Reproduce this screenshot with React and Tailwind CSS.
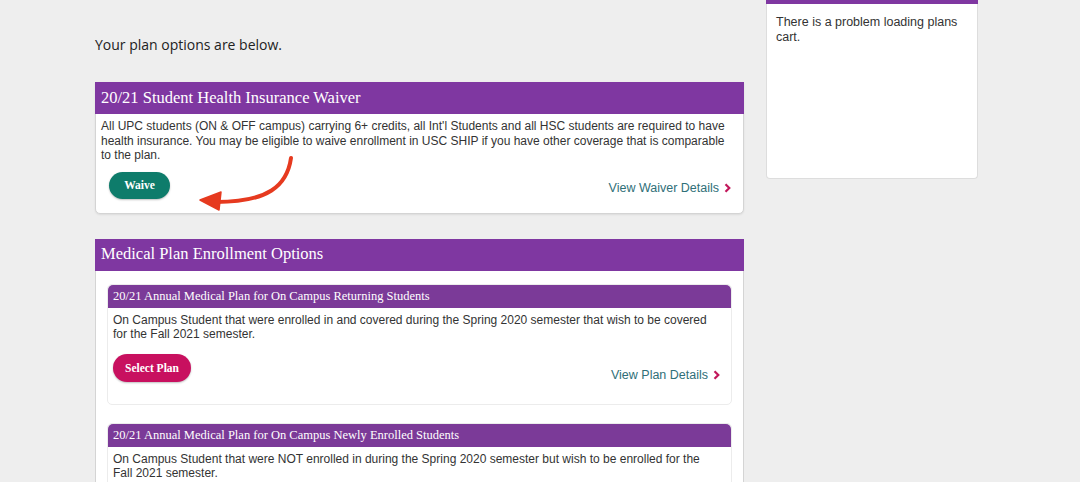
import React from 'react';

const serif = { fontFamily: '"Liberation Serif", "Times New Roman", serif' };

const DetailsLink = ({ label }) => (
  <a className="flex items-center gap-[5px] text-[12.5px] text-[#2f6f78] font-['Liberation_Sans',Arial,sans-serif]">
    {label}
    <svg width="7" height="10" viewBox="0 0 7 10">
      <path d="M1.5 1.2 L5.3 5 L1.5 8.8" fill="none" stroke="#c2185b" strokeWidth="2.2" />
    </svg>
  </a>
);

const PlanCard = ({ title, text, showButton }) => (
  <div className="bg-white border border-[#ececec] rounded-[5px]">
    <div
      className="h-[23px] bg-[#7b3a98] rounded-t-[5px] flex items-center px-[5px] text-[12.5px] text-white"
      style={serif}
    >
      {title}
    </div>
    <div className="px-[5px] pt-[5px] text-[12px] leading-[14px] text-[#333]">
      <p className="pr-[10px]">{text}</p>
      {showButton && (
        <div className="flex items-end justify-between pt-[13px] pb-[22px] pr-[6px]">
          <button
            className="h-[28px] w-[78px] rounded-full bg-[#c8105f] text-white text-[11.5px] font-bold shadow-[0_1px_2px_rgba(0,0,0,0.25)]"
            style={serif}
          >
            Select Plan
          </button>
          <DetailsLink label="View Plan Details" />
        </div>
      )}
    </div>
  </div>
);

export default function App() {
  return (
    <div className="min-h-[482px] h-[482px] overflow-hidden bg-[#eeeeee] flex items-start gap-[22px] pl-[95px] font-['Liberation_Sans',Arial,sans-serif]">
      <div className="w-[649px] flex flex-col pt-[35px]">
        <p className="text-[14px] leading-[20px] text-[#222] font-['Open_Sans',sans-serif]">
          Your plan options are below.
        </p>

        <div className="relative mt-[27px] bg-white border border-[#d4d4d4] rounded-b-[5px] shadow-[0_1px_2px_rgba(0,0,0,0.08)]">
          <div className="h-[32px] -mx-px -mt-px bg-[#7f37a1] flex items-center px-[6px] text-[16.5px] text-white" style={serif}>
            20/21 Student Health Insurance Waiver
          </div>
          <div className="px-[5px] pt-[5px] text-[12px] leading-[14.5px] text-[#333]">
            <p className="pr-[8px]">
              All UPC students (ON &amp; OFF campus) carrying 6+ credits, all Int'l Students and all HSC students are required to have
              health insurance. You may be eligible to waive enrollment in USC SHIP if you have other coverage that is comparable
              to the plan.
            </p>
            <div className="flex items-end justify-between pt-[9px] pb-[14px] pl-[8px] pr-[7px]">
              <button
                className="h-[27px] w-[61px] rounded-full bg-[#0e7c6b] text-white text-[11.5px] font-bold shadow-[0_1px_2px_rgba(0,0,0,0.25)]"
                style={serif}
              >
                Waive
              </button>
              <div className="pb-[3px]">
                <DetailsLink label="View Waiver Details" />
              </div>
            </div>
          </div>
          <svg className="absolute left-[-96px] top-[-83px] pointer-events-none" width="400" height="230" viewBox="0 0 400 230">
            <path d="M291 158 C 287 186, 268 202, 216 202" fill="none" stroke="#e63a1f" strokeWidth="4" strokeLinecap="round" />
            <path d="M200 200 L221 192 L219 210 Z" fill="#e63a1f" stroke="#e63a1f" strokeWidth="1.5" strokeLinejoin="round" />
          </svg>
        </div>

        <div className="mt-[25px] bg-white border border-[#d4d4d4] border-b-0">
          <div className="h-[32px] -mx-px -mt-px bg-[#7f37a1] flex items-center px-[6px] text-[16.5px] text-white" style={serif}>
            Medical Plan Enrollment Options
          </div>
          <div className="px-[11px] pt-[13px] flex flex-col gap-[18px]">
            <PlanCard
              title="20/21 Annual Medical Plan for On Campus Returning Students"
              text="On Campus Student that were enrolled in and covered during the Spring 2020 semester that wish to be covered for the Fall 2021 semester."
              showButton
            />
            <PlanCard
              title="20/21 Annual Medical Plan for On Campus Newly Enrolled Students"
              text="On Campus Student that were NOT enrolled in during the Spring 2020 semester but wish to be enrolled for the Fall 2021 semester."
              showButton
            />
          </div>
        </div>
      </div>

      <div className="w-[212px] flex flex-col">
        <div className="h-[4px] bg-[#7f37a1]" />
        <div className="h-[175px] bg-white border border-[#dddddd] border-t-0 rounded-b-[4px] px-[9px] pt-[11px] text-[12.5px] leading-[14.5px] text-[#333]">
          There is a problem loading plans cart.
        </div>
      </div>
    </div>
  );
}
